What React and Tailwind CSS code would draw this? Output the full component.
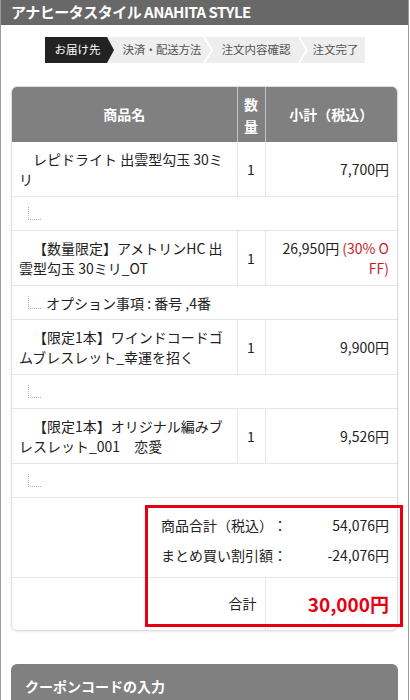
import React from "react";

const SP = "\u3000";

const items = [
    {
        name: (
            <>
                {SP}レピドライト 出雲型勾玉 30ミ
                <br />
                リ
            </>
        ),
        qty: 1,
        price: <>7,700円</>,
        option: null,
    },
    {
        name: (
            <>
                {SP}【数量限定】アメトリンHC 出
                <br />
                雲型勾玉 30ミリ_OT
            </>
        ),
        qty: 1,
        price: (
            <>
                26,950円 <span className="text-[#c81e1e]">(30% O</span>
                <br />
                <span className="text-[#c81e1e]">FF)</span>
            </>
        ),
        option: "オプション事項 : 番号 ,4番",
    },
    {
        name: (
            <>
                {SP}【限定1本】ワインドコードゴ
                <br />
                ムブレスレット_幸運を招く
            </>
        ),
        qty: 1,
        price: <>9,900円</>,
        option: null,
    },
    {
        name: (
            <>
                {SP}【限定1本】オリジナル編みブ
                <br />
                レスレット_001{SP}恋愛
            </>
        ),
        qty: 1,
        price: <>9,526円</>,
        option: null,
    },
];

function Chevron() {
    return (
        <svg width="10" height="26" viewBox="0 0 10 26" className="shrink-0">
            <polyline points="1,0 9,13 1,26" fill="none" stroke="#ffffff" strokeWidth="2" />
        </svg>
    );
}

function Steps() {
    return (
        <div className="mx-auto mt-[12px] flex h-[26px] w-[320px] bg-[#eeeeee] text-[11.5px] leading-none whitespace-nowrap">
            <div className="flex w-[62px] shrink-0 items-center bg-[#222222] pl-[10px] text-white">
                お届け先
            </div>
            <svg width="7" height="26" viewBox="0 0 7 26" className="shrink-0">
                <polygon points="0,0 7,13 0,26" fill="#222222" />
            </svg>
            <div className="flex w-[89px] shrink-0 items-center pl-[9px] text-[#555555] tracking-[-0.3px]">
                決済・配送方法
            </div>
            <Chevron />
            <div className="flex w-[85px] shrink-0 items-center pl-[9px] text-[#555555]">
                注文内容確認
            </div>
            <Chevron />
            <div className="flex flex-1 items-center pl-[5px] text-[#555555]">
                注文完了
            </div>
        </div>
    );
}

function OptionRow({ text }) {
    return (
        <tr>
            <td colSpan={3} className="border-b border-[#e6e6e6] pt-[7px] pb-[6px] pl-[16px] leading-[20px]">
                <span className="flex h-[20px] items-center">
                    <span className="mr-[5px] inline-block h-[13px] w-[13px] -translate-y-[1px] border-b border-l border-dotted border-[#b0b0b0]" />
                    {text}
                </span>
            </td>
        </tr>
    );
}

export default function App() {
    return (
        <div className="relative h-[700px] w-[409px] overflow-hidden border-x border-[#9a9a9a] bg-white font-['Noto_Sans_CJK_JP',sans-serif] text-[14px] text-[#222222] [text-spacing-trim:space-all]">
            <div className="flex h-[25px] items-center bg-[#686868] px-[10px] text-[15px] font-bold tracking-[-0.5px] text-white">
                アナヒータスタイル ANAHITA STYLE
            </div>

            <Steps />

            <div className="mx-[10px] mt-[23px] overflow-hidden rounded-[6px] border border-[#dddddd] shadow-[0_1px_2px_rgba(0,0,0,0.08)]">
                <table className="w-full table-fixed border-collapse">
                    <colgroup>
                        <col className="w-[225px]" />
                        <col className="w-[28px]" />
                        <col />
                    </colgroup>
                    <thead>
                        <tr className="h-[55px] bg-[#808080] text-white">
                            <th className="font-bold">商品名</th>
                            <th className="border-l border-[#c4c4c4] px-0 leading-[22px] font-bold">
                                数<br />量
                            </th>
                            <th className="border-l border-[#c4c4c4] font-bold">小計（税込）</th>
                        </tr>
                    </thead>
                    <tbody>
                        {items.map((item, index) => (
                            <React.Fragment key={index}>
                                <tr>
                                    <td className="border-b border-[#e6e6e6] px-[7px] py-[7px] align-middle leading-[20px]">
                                        {item.name}
                                    </td>
                                    <td className="border-b border-l border-[#e6e6e6] text-center align-middle">
                                        {item.qty}
                                    </td>
                                    <td className="border-b border-l border-[#e6e6e6] pr-[8px] text-right align-middle leading-[20px]">
                                        {item.price}
                                    </td>
                                </tr>
                                <OptionRow text={item.option} />
                            </React.Fragment>
                        ))}
                        <tr>
                            <td colSpan={3} className="border-b border-[#e6e6e6] pt-[12px] pr-[8px] pb-[7px]">
                                <div className="ml-[149px] flex h-[30px] items-center justify-between">
                                    <span>商品合計（税込）：</span>
                                    <span>54,076円</span>
                                </div>
                                <div className="ml-[149px] flex h-[30px] items-center justify-between">
                                    <span>まとめ買い割引額：</span>
                                    <span>-24,076円</span>
                                </div>
                            </td>
                        </tr>
                        <tr className="h-[52px]">
                            <td colSpan={2} className="pr-[8px] text-right align-middle">
                                合計
                            </td>
                            <td className="border-l border-[#e6e6e6] pr-[8px] text-right align-middle text-[19px] font-bold text-[#e60012]">
                                30,000円
                            </td>
                        </tr>
                    </tbody>
                </table>
            </div>

            <div className="mx-[10px] mt-[33px] h-[60px] rounded-t-[6px] bg-[#808080] px-[14px] pt-[12px] text-[14px] leading-[20px] font-bold text-white">
                クーポンコードの入力
            </div>

            <div className="absolute left-[144px] top-[505px] h-[122px] w-[258px] border-[3px] border-[#e60012]" />
        </div>
    );
}
